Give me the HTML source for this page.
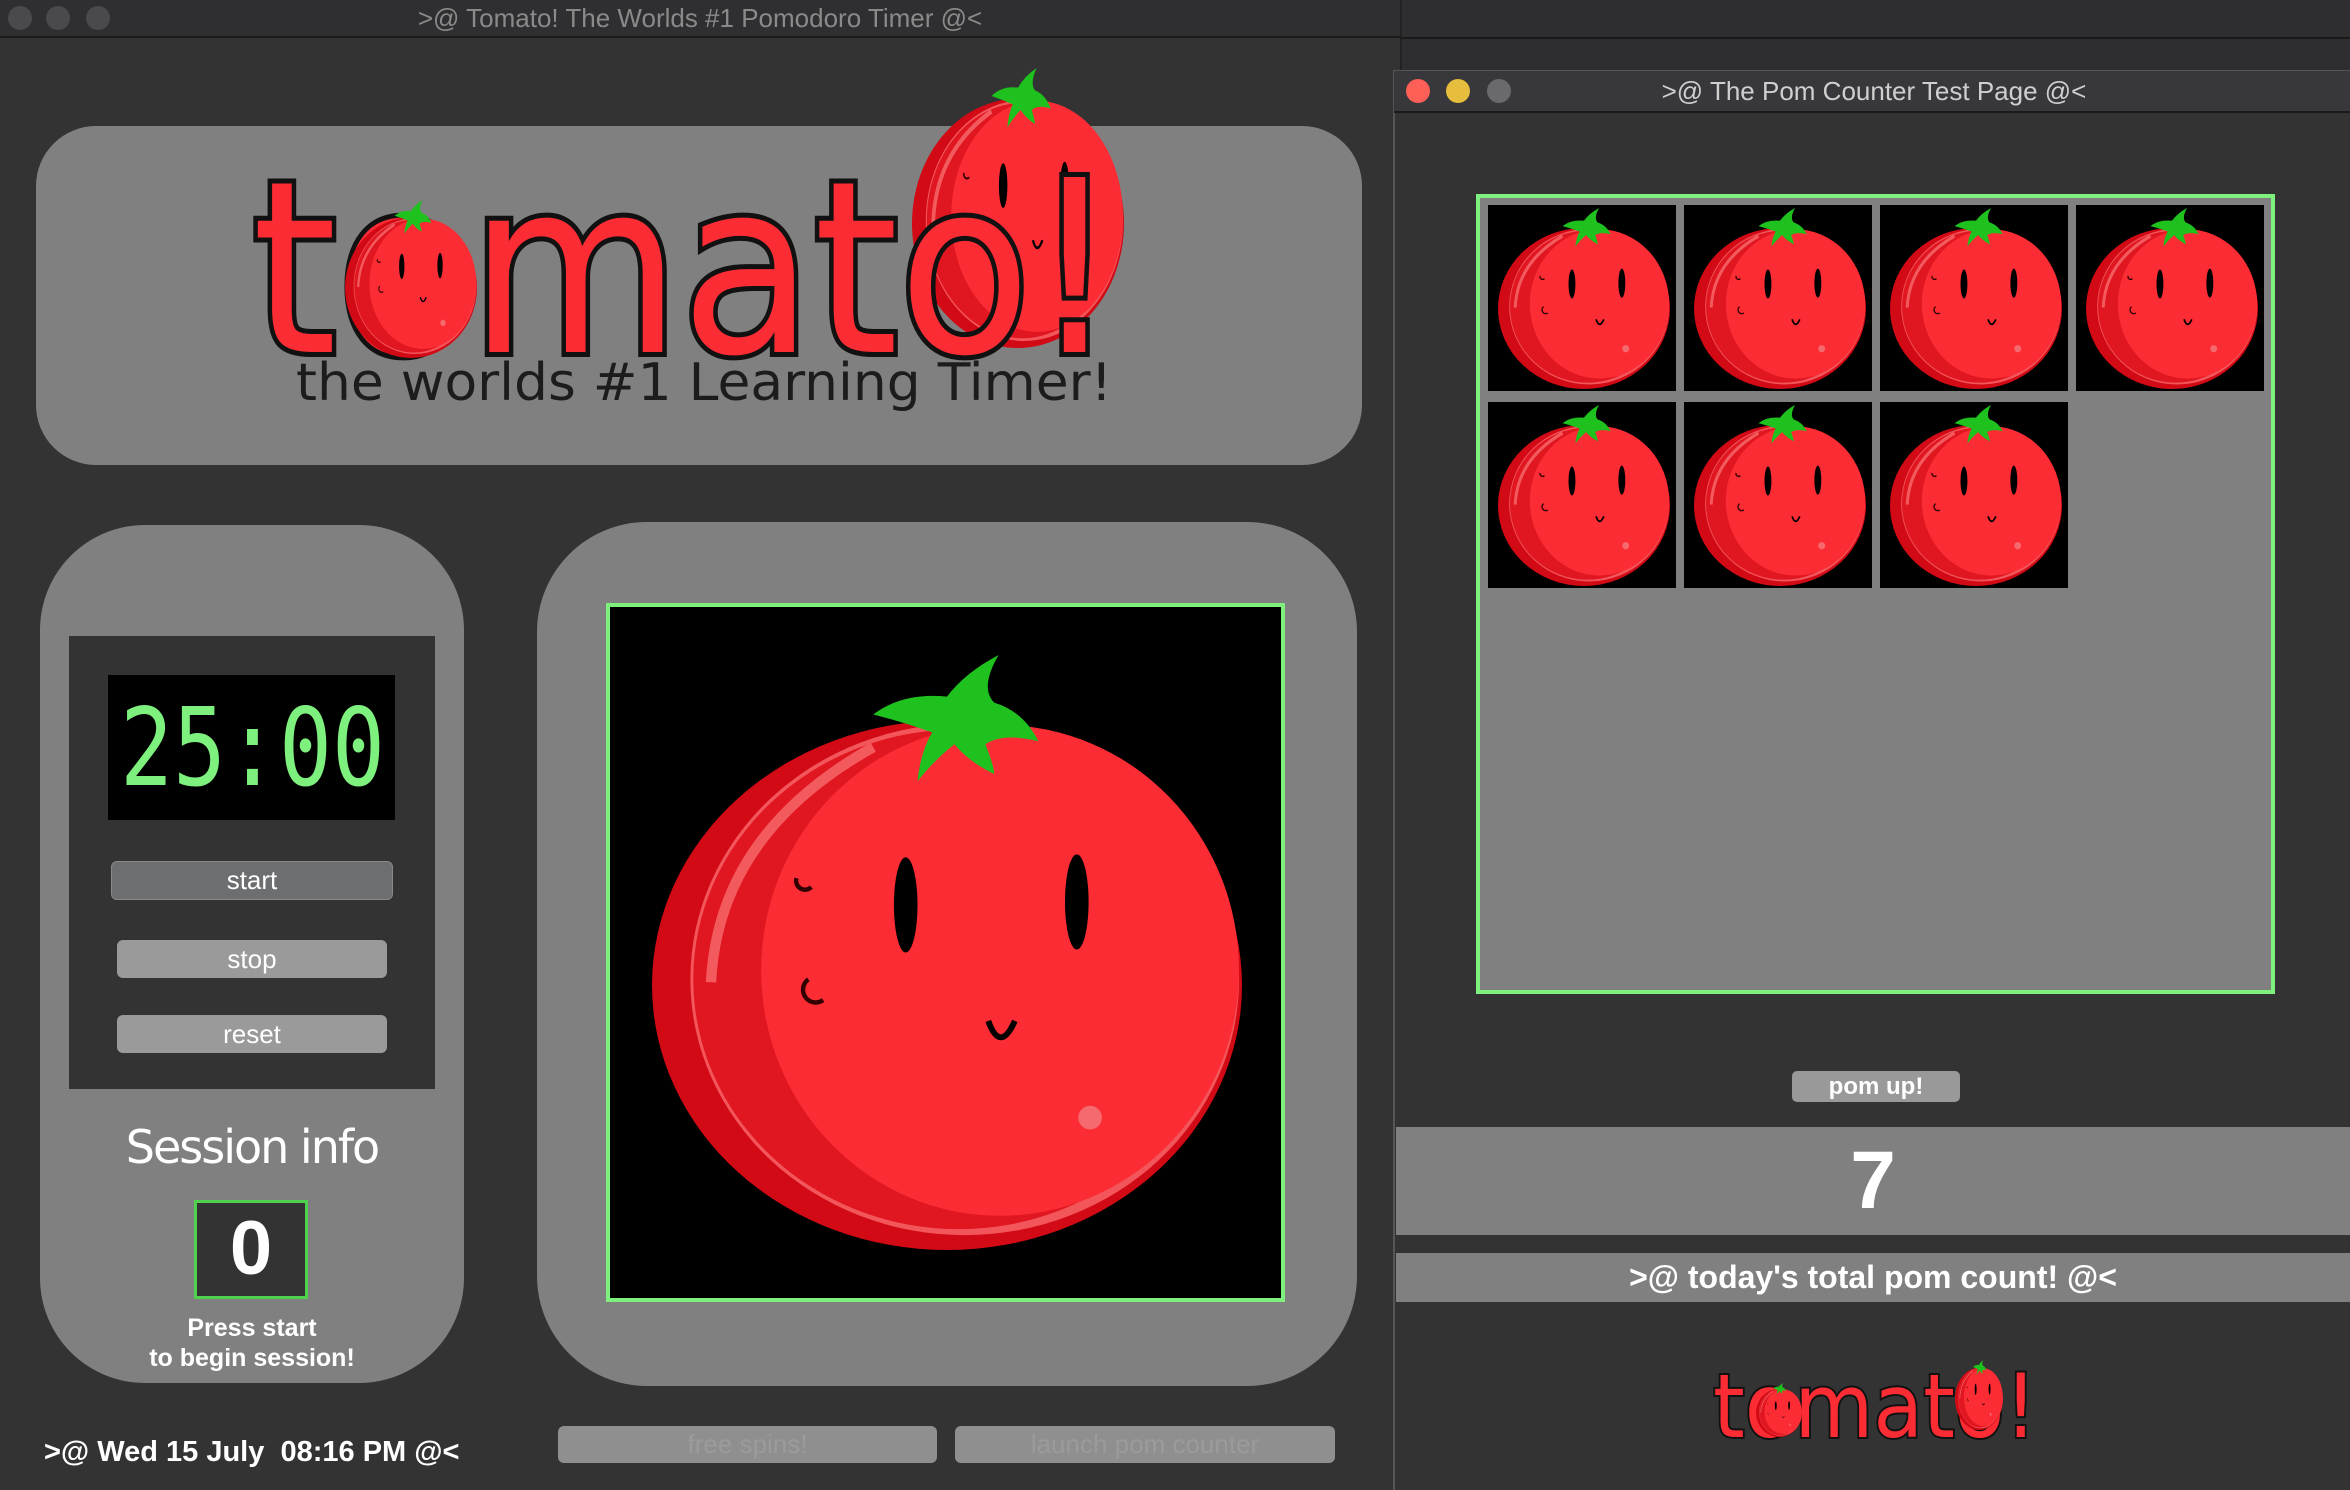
<!DOCTYPE html>
<html><head><meta charset="utf-8">
<style>
*{margin:0;padding:0;box-sizing:border-box}
body{width:2350px;height:1490px;background:#333;position:relative;overflow:hidden;font-family:"Liberation Sans",sans-serif}
.a{position:absolute}
.btn{position:absolute;border-radius:6px;text-align:center;color:#fff;font-size:26px}
</style></head><body>
<svg width="0" height="0" style="position:absolute">
<defs>
<symbol id="tom" viewBox="0 0 400 400" preserveAspectRatio="none">
<ellipse cx="200" cy="222" rx="200" ry="178" fill="#d20a15"/>
<ellipse cx="212" cy="218" rx="186" ry="172" fill="#f2565b"/>
<ellipse cx="208" cy="218" rx="180" ry="168" fill="#e01620"/>
<ellipse cx="236" cy="212" rx="162" ry="165" fill="#fc2c34"/>
<path d="M40 220 Q45 120 150 62" stroke="#f25a5e" stroke-width="7" fill="none"/>
<ellipse cx="172" cy="168" rx="8" ry="32" fill="#000"/>
<ellipse cx="288" cy="166" rx="8" ry="32" fill="#000"/>
<path d="M228 246 Q236 268 246 246" stroke="#000" stroke-width="4" fill="none"/>
<path d="M98 150 a6 6 0 0 0 10 6" stroke="#300" stroke-width="3" fill="none"/>
<path d="M106 218 a8 8 0 0 0 10 14" stroke="#300" stroke-width="3" fill="none"/>
<circle cx="297" cy="311" r="8" fill="#f56a6e"/>
<path d="M150 40 Q170 25 200 28 Q212 12 235 0 Q222 22 232 32 Q252 38 262 58 Q238 52 226 60 Q232 75 232 80 Q215 72 205 60 Q190 72 180 85 Q182 65 190 52 Q170 45 150 40Z" fill="#1fc11f"/>
</symbol>
</defs>
</svg>

<div class="a" style="left:0;top:0;width:1400px;height:38px;background:#2f2e31;border-bottom:2px solid #1a1a1a"></div>
<div class="a" style="left:8px;top:6px;width:24px;height:24px;border-radius:50%;background:#4a4a4c"></div>
<div class="a" style="left:46px;top:6px;width:24px;height:24px;border-radius:50%;background:#4a4a4c"></div>
<div class="a" style="left:86px;top:6px;width:24px;height:24px;border-radius:50%;background:#4a4a4c"></div>
<div class="a" style="left:300px;top:3px;width:800px;text-align:center;color:#8a8a8a;font-size:26px">&gt;@ Tomato! The Worlds #1 Pomodoro Timer @&lt;</div>

<div class="a" style="left:36px;top:126px;width:1326px;height:339px;background:#808080;border-radius:60px"></div>
<svg class="a" style="left:0;top:0" width="1400" height="480">
<use href="#tom" x="912" y="68" width="212" height="280"/>
<text x="252" y="352" font-family="DejaVu Sans" font-size="240" fill="#fc2c34" stroke="#111" stroke-width="10" paint-order="stroke" textLength="866" lengthAdjust="spacingAndGlyphs">tomato!</text>
<use href="#tom" x="345" y="200" width="132" height="158"/>
<text x="296" y="400" font-family="DejaVu Sans" font-size="52" fill="#1c1c1c" textLength="816" lengthAdjust="spacingAndGlyphs">the worlds #1 Learning Timer!</text>
</svg>

<div class="a" style="left:40px;top:525px;width:424px;height:858px;background:#808080;border-radius:105px"></div>
<div class="a" style="left:69px;top:636px;width:366px;height:453px;background:#333"></div>
<div class="a" style="left:108px;top:675px;width:287px;height:145px;background:#000"></div>
<svg class="a" style="left:108px;top:675px" width="287" height="145">
<text x="12" y="110" font-family="DejaVu Sans Mono" font-size="108" fill="#7ef07e" textLength="265" lengthAdjust="spacingAndGlyphs">25:00</text>
</svg>
<div class="btn" style="left:111px;top:861px;width:282px;height:39px;background:#6d6e70;border:1px solid #888;line-height:37px">start</div>
<div class="btn" style="left:117px;top:940px;width:270px;height:38px;background:#9a9a9a;line-height:38px">stop</div>
<div class="btn" style="left:117px;top:1015px;width:270px;height:38px;background:#9a9a9a;line-height:38px">reset</div>
<div class="a" style="left:40px;top:1120px;width:424px;text-align:center;color:#fff;font-family:'DejaVu Sans',sans-serif;font-size:46px;letter-spacing:-2px">Session info</div>
<div class="a" style="left:194px;top:1200px;width:114px;height:99px;background:#333;border:3px solid #4fd04f;color:#fff;font-weight:bold;font-size:76px;text-align:center;line-height:92px">0</div>
<div class="a" style="left:40px;top:1313px;width:424px;text-align:center;color:#fff;font-weight:bold;font-size:25px;line-height:30px">Press start<br>to begin session!</div>
<div class="a" style="left:44px;top:1436px;color:#fff;font-weight:bold;font-size:29px;white-space:pre">&gt;@ Wed 15 July  08:16 PM @&lt;</div>

<div class="a" style="left:537px;top:522px;width:820px;height:864px;background:#808080;border-radius:110px"></div>
<div class="a" style="left:606px;top:603px;width:679px;height:699px;background:#000;border:4px solid #7ef07e"></div>
<svg class="a" style="left:652px;top:655px" width="590" height="595"><use href="#tom" x="0" y="0" width="590" height="595"/></svg>
<div class="btn" style="left:558px;top:1426px;width:379px;height:37px;background:#8f8f8f;color:#9b9b9b;line-height:37px">free spins!</div>
<div class="btn" style="left:955px;top:1426px;width:380px;height:37px;background:#8f8f8f;color:#9b9b9b;line-height:37px">launch pom counter</div>

<div class="a" style="left:1400px;top:0;width:950px;height:70px;background:#2e2e30;border-left:2px solid #222"></div>
<div class="a" style="left:1400px;top:37px;width:950px;height:2px;background:#1a1a1a"></div>

<div class="a" style="left:1393px;top:70px;width:957px;height:1420px;background:#333;border-left:2px solid #555;border-top:1px solid #555"></div>
<div class="a" style="left:1394px;top:71px;width:956px;height:42px;background:#38373b;border-bottom:2px solid #1a1a1a"></div>
<div class="a" style="left:1406px;top:79px;width:24px;height:24px;border-radius:50%;background:#fe5f57"></div>
<div class="a" style="left:1446px;top:79px;width:24px;height:24px;border-radius:50%;background:#e6bd3c"></div>
<div class="a" style="left:1487px;top:79px;width:24px;height:24px;border-radius:50%;background:#6a6a6e"></div>
<div class="a" style="left:1474px;top:76px;width:800px;text-align:center;color:#cfcfcf;font-size:26px">&gt;@ The Pom Counter Test Page @&lt;</div>

<div class="a" style="left:1476px;top:194px;width:799px;height:800px;background:#808080;border:4px solid #7ef07e"></div>
<svg class="a" style="left:1488px;top:205px" width="780" height="385">
<g id="tile"><rect width="188" height="186" fill="#000"/><use href="#tom" x="10" y="3" width="172" height="181"/></g>
<use href="#tile" x="196"/><use href="#tile" x="392"/><use href="#tile" x="588"/>
<use href="#tile" y="197"/><use href="#tile" x="196" y="197"/><use href="#tile" x="392" y="197"/>
</svg>

<div class="btn" style="left:1792px;top:1071px;width:168px;height:31px;background:#999;font-weight:bold;font-size:24px;line-height:31px;border-radius:5px">pom up!</div>
<div class="a" style="left:1396px;top:1127px;width:954px;height:108px;background:#808080;color:#fff;font-weight:bold;font-size:82px;text-align:center;line-height:108px">7</div>
<div class="a" style="left:1396px;top:1253px;width:954px;height:49px;background:#808080;color:#fff;font-weight:bold;font-size:32px;text-align:center;line-height:49px">&gt;@ today's total pom count! @&lt;</div>
<svg class="a" style="left:1700px;top:1355px" width="350" height="100">
<text x="13" y="82" font-family="DejaVu Sans" font-size="88" fill="#fc2c34" stroke="#111" stroke-width="4" paint-order="stroke" textLength="324" lengthAdjust="spacingAndGlyphs">tomato!</text>
<use href="#tom" x="56" y="28" width="46" height="54"/>
<use href="#tom" x="255" y="5" width="48" height="70"/>
</svg>
</body></html>
